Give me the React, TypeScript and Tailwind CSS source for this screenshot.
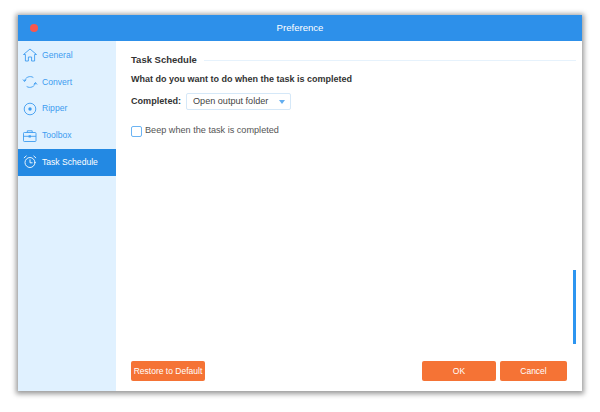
import { ReactNode } from "react";

const HomeIcon = () => (
  <svg width="16" height="16" viewBox="0 0 16 16" fill="none" stroke="currentColor" strokeWidth="0.9" strokeLinejoin="round">
    <path d="M1.5 7.5 8 2l6.500 5.500H12.600" />
    <path d="M1.500 7.500H3.400V14H6.400V10H9.600V14H12.600V7.500" />
  </svg>
);

const ConvertIcon = () => (
  <svg width="16" height="16" viewBox="0 0 16 16" fill="none" stroke="currentColor" strokeWidth="0.9" strokeLinecap="round">
    <path d="M2.500 7A5.600 5.600 0 0 1 11 3.300" />
    <path d="M13.500 9A5.600 5.600 0 0 1 5 12.700" />
    <path d="M1.200 5.800 2.500 7.400 4 6" />
    <path d="M14.800 10.200 13.500 8.600 12 10" />
  </svg>
);

const RipperIcon = () => (
  <svg width="16" height="16" viewBox="0 0 16 16" fill="none" stroke="currentColor" strokeWidth="0.9">
    <circle cx="8" cy="8" r="5.800" />
    <circle cx="8" cy="8" r="1.700" fill="currentColor" stroke="none" />
  </svg>
);

const ToolboxIcon = () => (
  <svg width="16" height="16" viewBox="0 0 16 16" fill="none" stroke="currentColor" strokeWidth="0.9">
    <rect x="1.500" y="4.500" width="12.500" height="9" rx="0.800" />
    <path d="M5.300 4.500V2.800H10.200V4.500" />
    <path d="M1.500 8.300H14" />
    <rect x="6.600" y="7.300" width="2.300" height="2.200" fill="currentColor" stroke="none" />
  </svg>
);

const AlarmIcon = () => (
  <svg width="16" height="16" viewBox="0 0 16 16" fill="none" stroke="currentColor" strokeWidth="0.9" strokeLinecap="round">
    <circle cx="8" cy="8.500" r="5" />
    <path d="M8 5.800V8.800H10.200" />
    <path d="M2.200 3.800 4.200 2" />
    <path d="M13.800 3.800 11.800 2" />
  </svg>
);

const items: { label: string; icon: ReactNode; active?: boolean }[] = [
  { label: "General", icon: <HomeIcon /> },
  { label: "Convert", icon: <ConvertIcon /> },
  { label: "Ripper", icon: <RipperIcon /> },
  { label: "Toolbox", icon: <ToolboxIcon /> },
  { label: "Task Schedule", icon: <AlarmIcon />, active: true },
];

const App = () => {
  return (
    <div className="w-[600px] h-[412px] bg-white pt-[15px] pl-[18px] font-['Liberation_Sans',sans-serif] overflow-hidden">
      <div className="w-[564px] h-[376px] flex flex-col bg-white shadow-[0_1px_5px_2px_rgba(0,0,0,0.4)]">
        {/* title bar */}
        <div className="relative h-[26px] flex items-center justify-center bg-[#2d90ea] text-white text-[9.6px]">
          <span className="absolute left-[12px] top-[9px] w-2 h-2 rounded-full bg-[#f8574f]"></span>
          Preference
        </div>

        <div className="flex flex-1 min-h-0">
          {/* sidebar */}
          <div className="w-[98px] bg-[#e0f1ff] pt-[1px]">
            {items.map((item) => (
              <div
                key={item.label}
                className={`h-[26.75px] flex items-center pl-[4px] gap-[4px] text-[8.6px] ${
                  item.active ? "bg-[#2389e3] text-white" : "text-[#3d9cf0]"
                }`}
              >
                {item.icon}
                <span>{item.label}</span>
              </div>
            ))}
          </div>

          {/* main panel */}
          <div className="relative flex-1 flex flex-col pl-[15px] pr-[15px] pb-[10px] text-[#333]">
            <div className="flex items-center gap-[7px] mr-[-9px] mt-[12px]">
              <span className="text-[9.5px] font-bold">Task Schedule</span>
              <div className="flex-1 h-[1px] bg-[#e6f2fc]"></div>
            </div>
            <div className="mt-[5px] text-[9px] font-bold leading-[14px]">What do you want to do when the task is completed</div>
            <div className="flex items-center mt-[7px] gap-[5px]">
              <span className="text-[9.1px] font-bold">Completed:</span>
              <div className="w-[105px] h-[17px] flex items-center justify-between pl-[6px] pr-[5px] border border-[#d5e8f8] rounded-[2px] text-[9.1px] text-[#444]">
                Open output folder
                <span className="w-0 h-0 border-x-[3px] border-x-transparent border-t-[4px] border-t-[#63aef0]"></span>
              </div>
            </div>
            <div className="flex items-center mt-[14px] gap-[3px] text-[9.15px] text-[#555]">
              <span className="w-[11px] h-[11px] border border-[#6cb4f3] rounded-[2px]"></span>
              Beep when the task is completed
            </div>

            <div className="mt-auto flex items-center text-white text-[8.5px]">
              <button className="w-[74px] h-[20px] bg-[#f57335] rounded-[2px]">Restore to Default</button>
              <button className="ml-auto w-[74px] h-[20px] bg-[#f57335] rounded-[2px]">OK</button>
              <button className="ml-[4px] w-[67px] h-[20px] bg-[#f57335] rounded-[2px]">Cancel</button>
            </div>

            {/* scrollbar */}
            <div className="absolute right-[6px] top-[229px] w-[3px] h-[74px] bg-[#2d95f0]"></div>
          </div>
        </div>
      </div>
    </div>
  );
};

export default App;
